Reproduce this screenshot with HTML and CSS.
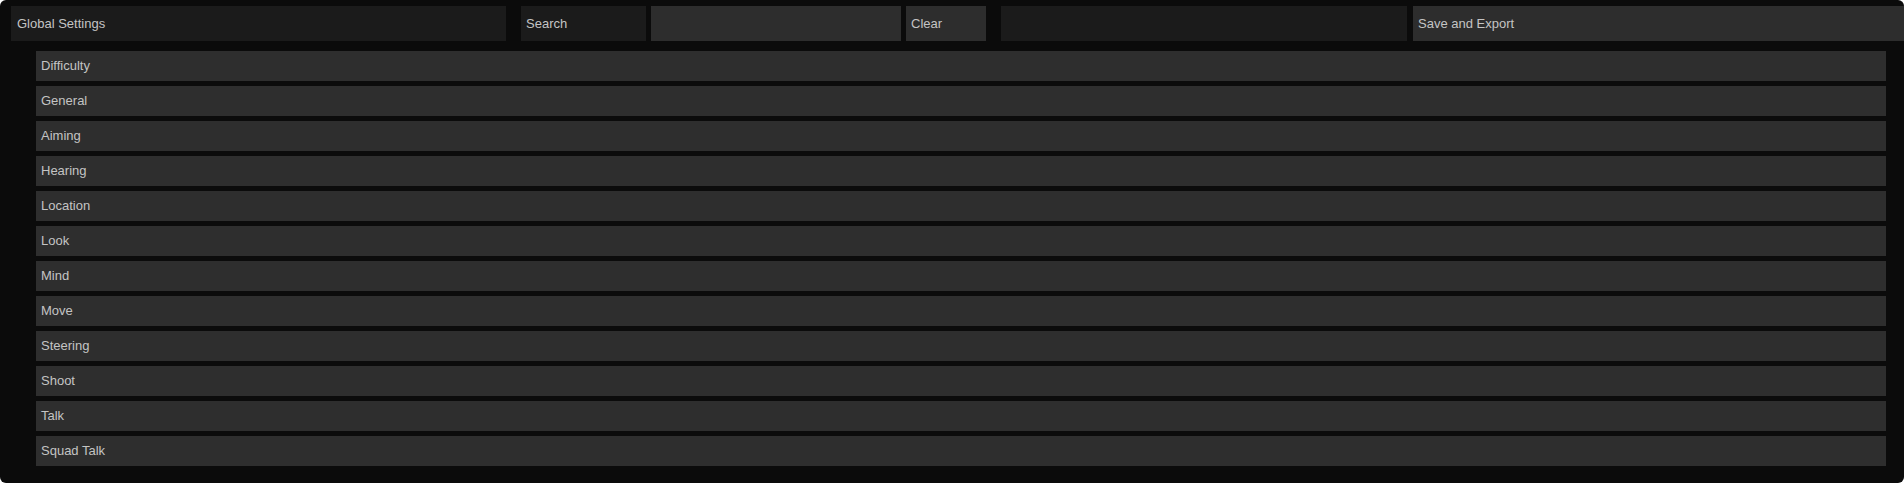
FILE: index.html
```html
<!DOCTYPE html>
<html>
<head>
<meta charset="utf-8">
<link rel="stylesheet" href="styles.css">
</head>
<body>
<div class="panel">
  <div class="toolbar">
    <div class="cell dark global">Global Settings</div>
    <div class="cell dark search">Search</div>
    <div class="cell light input"></div>
    <div class="cell light clear">Clear</div>
    <div class="cell dark field"></div>
    <div class="cell light save">Save and Export</div>
  </div>
  <div class="list">
    <div class="row">Difficulty</div>
    <div class="row">General</div>
    <div class="row">Aiming</div>
    <div class="row">Hearing</div>
    <div class="row">Location</div>
    <div class="row">Look</div>
    <div class="row">Mind</div>
    <div class="row">Move</div>
    <div class="row">Steering</div>
    <div class="row">Shoot</div>
    <div class="row">Talk</div>
    <div class="row">Squad Talk</div>
  </div>
</div>
</body>
</html>
```

FILE: styles.css
```css
html, body {
  margin: 0;
  padding: 0;
  background: #ffffff;
}
body {
  font-family: "Liberation Sans", Arial, sans-serif;
  font-size: 13px;
  color: #c4c4c4;
}
.panel {
  width: 1904px;
  height: 483px;
  background: #0b0b0b;
  border-radius: 6px;
  overflow: hidden;
  box-sizing: border-box;
  padding-top: 6px;
}
.toolbar {
  display: flex;
  height: 35px;
  padding-left: 11px;
}
.cell {
  height: 35px;
  line-height: 35px;
  padding-left: 5px;
  box-sizing: border-box;
  white-space: nowrap;
}
.dark { background: #1b1b1b; }
.light { background: #2d2d2d; }
.global { width: 495px; padding-left: 6px; }
.search { width: 125px; margin-left: 15px; }
.input { width: 250px; margin-left: 5px; }
.clear { width: 80px; margin-left: 5px; }
.field { width: 406px; margin-left: 15px; }
.save { flex: 1; margin-left: 6px; }
.list {
  display: flex;
  flex-direction: column;
  gap: 5px;
  margin-top: 10px;
  margin-left: 36px;
  width: 1850px;
}
.row {
  height: 30px;
  line-height: 30px;
  background: #2e2e2e;
  padding-left: 5px;
}
```
